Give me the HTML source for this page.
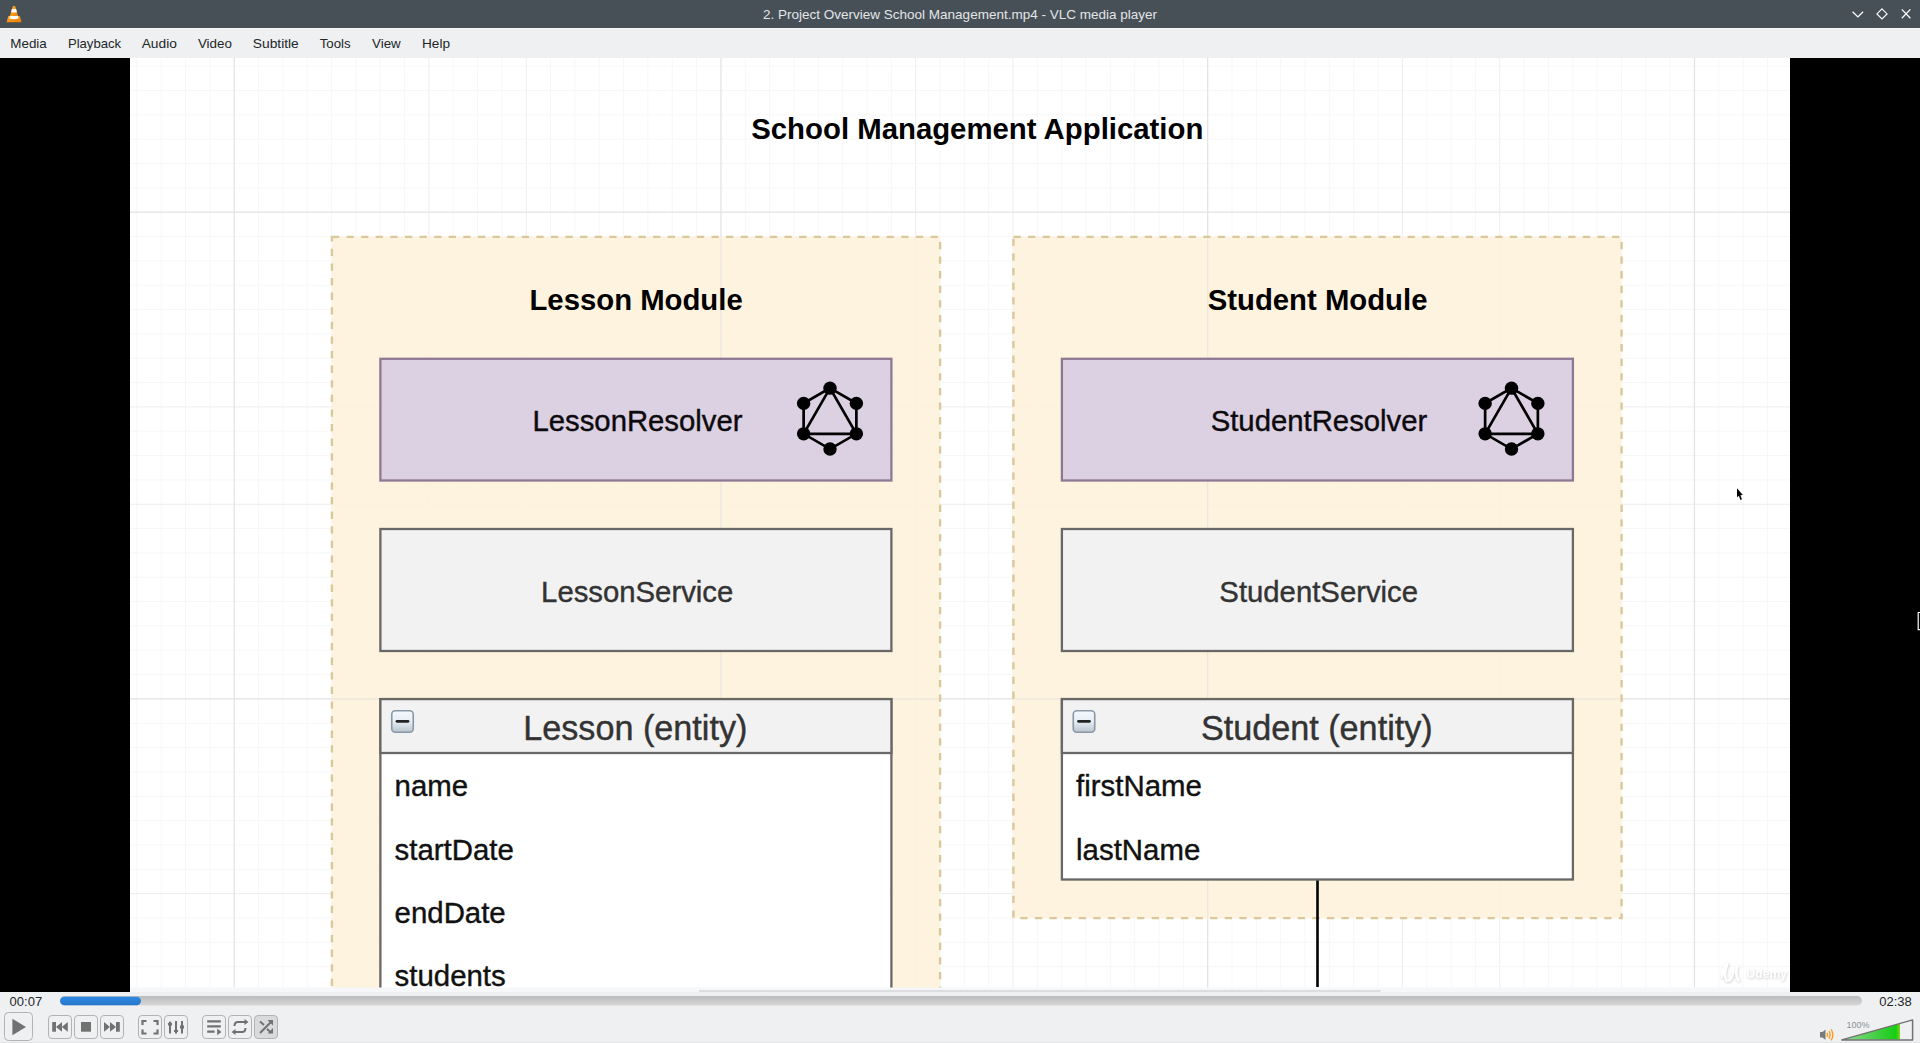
<!DOCTYPE html>
<html><head><meta charset="utf-8">
<style>
html,body{margin:0;padding:0;width:1920px;height:1043px;overflow:hidden;background:#eff0f1;}
svg{display:block;}
text{font-family:"Liberation Sans", sans-serif;}
</style></head><body>
<svg width="1920" height="1043" viewBox="0 0 1920 1043">
<defs>
<linearGradient id="colg" x1="0" y1="0" x2="0" y2="1">
<stop offset="0" stop-color="#f4f9fd"/><stop offset="0.5" stop-color="#e6eef5"/><stop offset="1" stop-color="#b9c4cd"/>
</linearGradient>
<linearGradient id="trough" x1="0" y1="0" x2="0" y2="1">
<stop offset="0" stop-color="#bcbcbc"/><stop offset="1" stop-color="#d6d6d6"/>
</linearGradient>
<linearGradient id="prog" x1="0" y1="0" x2="0" y2="1">
<stop offset="0" stop-color="#2f8ae2"/><stop offset="1" stop-color="#2576cb"/>
</linearGradient>
<linearGradient id="volg" x1="0" y1="0" x2="1" y2="0">
<stop offset="0" stop-color="#93dc93"/><stop offset="0.55" stop-color="#49cf49"/><stop offset="0.93" stop-color="#14cf14"/><stop offset="1" stop-color="#86d21a"/>
</linearGradient>
<filter id="wm" x="-20%" y="-40%" width="140%" height="180%"><feDropShadow dx="0.6" dy="1" stdDeviation="0.9" flood-color="#c8c8c8" flood-opacity="0.9"/></filter>
<filter id="cur" x="-50%" y="-50%" width="200%" height="200%"><feGaussianBlur stdDeviation="0.45"/></filter>
<filter id="vblur" x="0" y="0" width="1" height="1" filterUnits="objectBoundingBox"><feGaussianBlur stdDeviation="0.8"/></filter>
<linearGradient id="cone" x1="0" y1="0" x2="1" y2="1">
<stop offset="0" stop-color="#ffac2e"/><stop offset="1" stop-color="#ee7d00"/>
</linearGradient>
</defs>

<rect x="0" y="0" width="1920" height="28" fill="#475057"/>
<rect x="0" y="28" width="1920" height="1" fill="#f7f7f8"/>
<g>
<path d="M6.6,22.3 L8.3,15.9 L19.8,15.9 L21.6,22.3 Z" fill="url(#cone)"/>
<path d="M12.5,6.9 Q14,4.8 15.5,6.9 L18.9,19.2 Q14,20.9 9.1,19.2 Z" fill="url(#cone)"/>
<path d="M11.9,9.1 L16.1,9.1 L16.95,12.2 Q14,12.9 11.05,12.2 Z" fill="#fbfbfb"/>
<path d="M10.1,15.7 Q14,16.4 17.9,15.7 L18.7,18.6 Q14,19.7 9.3,18.6 Z" fill="#fbfbfb"/>
</g>
<text x="960" y="19.3" font-size="13.5" fill="#e3e5e7" text-anchor="middle">2. Project Overview School Management.mp4 - VLC media player</text>
<path d="M1852.6,11.8 L1857.9,16.9 L1863.1,11.8" fill="none" stroke="#fcfcfc" stroke-width="1.3"/>
<path d="M1882,8.8 L1887.1,13.9 L1882,19 L1876.9,13.9 Z" fill="none" stroke="#fcfcfc" stroke-width="1.15"/>
<path d="M1901.8,9.4 L1910.4,18.2 M1910.4,9.4 L1901.8,18.2" fill="none" stroke="#fcfcfc" stroke-width="1.3"/>
<text x="10.3" y="47.9" font-size="13.3" fill="#232629" textLength="36.5" lengthAdjust="spacingAndGlyphs">Media</text>
<text x="67.9" y="47.9" font-size="13.3" fill="#232629" textLength="53.2" lengthAdjust="spacingAndGlyphs">Playback</text>
<text x="141.7" y="47.9" font-size="13.3" fill="#232629" textLength="35.2" lengthAdjust="spacingAndGlyphs">Audio</text>
<text x="197.9" y="47.9" font-size="13.3" fill="#232629" textLength="34.0" lengthAdjust="spacingAndGlyphs">Video</text>
<text x="252.8" y="47.9" font-size="13.3" fill="#232629" textLength="46.0" lengthAdjust="spacingAndGlyphs">Subtitle</text>
<text x="319.7" y="47.9" font-size="13.3" fill="#232629" textLength="31.0" lengthAdjust="spacingAndGlyphs">Tools</text>
<text x="372.1" y="47.9" font-size="13.3" fill="#232629" textLength="28.6" lengthAdjust="spacingAndGlyphs">View</text>
<text x="422.0" y="47.9" font-size="13.3" fill="#232629" textLength="28.0" lengthAdjust="spacingAndGlyphs">Help</text>
<rect x="0" y="58" width="1920" height="934" fill="#000"/>
<rect x="130" y="58" width="1660" height="934" fill="#ffffff"/>
<svg x="130" y="58" width="1660" height="934" viewBox="130 58 1660 934" overflow="hidden">
<g class="dg">
<rect x="130" y="58" width="1660" height="934" fill="#ffffff"/>
<line x1="136.85" y1="58" x2="136.85" y2="992" stroke="#f7f7f7" stroke-width="1"/>
<line x1="161.19" y1="58" x2="161.19" y2="992" stroke="#f7f7f7" stroke-width="1"/>
<line x1="185.52" y1="58" x2="185.52" y2="992" stroke="#f7f7f7" stroke-width="1"/>
<line x1="209.86" y1="58" x2="209.86" y2="992" stroke="#f7f7f7" stroke-width="1"/>
<line x1="258.54" y1="58" x2="258.54" y2="992" stroke="#f7f7f7" stroke-width="1"/>
<line x1="282.88" y1="58" x2="282.88" y2="992" stroke="#f7f7f7" stroke-width="1"/>
<line x1="307.21" y1="58" x2="307.21" y2="992" stroke="#f7f7f7" stroke-width="1"/>
<line x1="331.55" y1="58" x2="331.55" y2="992" stroke="#f7f7f7" stroke-width="1"/>
<line x1="355.89" y1="58" x2="355.89" y2="992" stroke="#f7f7f7" stroke-width="1"/>
<line x1="380.22" y1="58" x2="380.22" y2="992" stroke="#f7f7f7" stroke-width="1"/>
<line x1="404.56" y1="58" x2="404.56" y2="992" stroke="#f7f7f7" stroke-width="1"/>
<line x1="428.90" y1="58" x2="428.90" y2="992" stroke="#ededed" stroke-width="1"/>
<line x1="453.24" y1="58" x2="453.24" y2="992" stroke="#f7f7f7" stroke-width="1"/>
<line x1="477.57" y1="58" x2="477.57" y2="992" stroke="#f7f7f7" stroke-width="1"/>
<line x1="501.91" y1="58" x2="501.91" y2="992" stroke="#f7f7f7" stroke-width="1"/>
<line x1="526.25" y1="58" x2="526.25" y2="992" stroke="#ededed" stroke-width="1"/>
<line x1="550.59" y1="58" x2="550.59" y2="992" stroke="#f7f7f7" stroke-width="1"/>
<line x1="574.92" y1="58" x2="574.92" y2="992" stroke="#f7f7f7" stroke-width="1"/>
<line x1="599.26" y1="58" x2="599.26" y2="992" stroke="#f7f7f7" stroke-width="1"/>
<line x1="623.60" y1="58" x2="623.60" y2="992" stroke="#f7f7f7" stroke-width="1"/>
<line x1="647.94" y1="58" x2="647.94" y2="992" stroke="#f7f7f7" stroke-width="1"/>
<line x1="672.27" y1="58" x2="672.27" y2="992" stroke="#f7f7f7" stroke-width="1"/>
<line x1="696.61" y1="58" x2="696.61" y2="992" stroke="#f7f7f7" stroke-width="1"/>
<line x1="745.29" y1="58" x2="745.29" y2="992" stroke="#f7f7f7" stroke-width="1"/>
<line x1="769.62" y1="58" x2="769.62" y2="992" stroke="#f7f7f7" stroke-width="1"/>
<line x1="793.96" y1="58" x2="793.96" y2="992" stroke="#f7f7f7" stroke-width="1"/>
<line x1="818.30" y1="58" x2="818.30" y2="992" stroke="#f7f7f7" stroke-width="1"/>
<line x1="842.64" y1="58" x2="842.64" y2="992" stroke="#f7f7f7" stroke-width="1"/>
<line x1="866.97" y1="58" x2="866.97" y2="992" stroke="#f7f7f7" stroke-width="1"/>
<line x1="891.31" y1="58" x2="891.31" y2="992" stroke="#f7f7f7" stroke-width="1"/>
<line x1="915.65" y1="58" x2="915.65" y2="992" stroke="#ededed" stroke-width="1"/>
<line x1="939.99" y1="58" x2="939.99" y2="992" stroke="#f7f7f7" stroke-width="1"/>
<line x1="964.33" y1="58" x2="964.33" y2="992" stroke="#f7f7f7" stroke-width="1"/>
<line x1="988.66" y1="58" x2="988.66" y2="992" stroke="#f7f7f7" stroke-width="1"/>
<line x1="1013.00" y1="58" x2="1013.00" y2="992" stroke="#ededed" stroke-width="1"/>
<line x1="1037.34" y1="58" x2="1037.34" y2="992" stroke="#f7f7f7" stroke-width="1"/>
<line x1="1061.67" y1="58" x2="1061.67" y2="992" stroke="#f7f7f7" stroke-width="1"/>
<line x1="1086.01" y1="58" x2="1086.01" y2="992" stroke="#f7f7f7" stroke-width="1"/>
<line x1="1110.35" y1="58" x2="1110.35" y2="992" stroke="#f7f7f7" stroke-width="1"/>
<line x1="1134.69" y1="58" x2="1134.69" y2="992" stroke="#f7f7f7" stroke-width="1"/>
<line x1="1159.02" y1="58" x2="1159.02" y2="992" stroke="#f7f7f7" stroke-width="1"/>
<line x1="1183.36" y1="58" x2="1183.36" y2="992" stroke="#f7f7f7" stroke-width="1"/>
<line x1="1232.04" y1="58" x2="1232.04" y2="992" stroke="#f7f7f7" stroke-width="1"/>
<line x1="1256.38" y1="58" x2="1256.38" y2="992" stroke="#f7f7f7" stroke-width="1"/>
<line x1="1280.71" y1="58" x2="1280.71" y2="992" stroke="#f7f7f7" stroke-width="1"/>
<line x1="1305.05" y1="58" x2="1305.05" y2="992" stroke="#f7f7f7" stroke-width="1"/>
<line x1="1329.39" y1="58" x2="1329.39" y2="992" stroke="#f7f7f7" stroke-width="1"/>
<line x1="1353.72" y1="58" x2="1353.72" y2="992" stroke="#f7f7f7" stroke-width="1"/>
<line x1="1378.06" y1="58" x2="1378.06" y2="992" stroke="#f7f7f7" stroke-width="1"/>
<line x1="1402.40" y1="58" x2="1402.40" y2="992" stroke="#ededed" stroke-width="1"/>
<line x1="1426.74" y1="58" x2="1426.74" y2="992" stroke="#f7f7f7" stroke-width="1"/>
<line x1="1451.08" y1="58" x2="1451.08" y2="992" stroke="#f7f7f7" stroke-width="1"/>
<line x1="1475.41" y1="58" x2="1475.41" y2="992" stroke="#f7f7f7" stroke-width="1"/>
<line x1="1499.75" y1="58" x2="1499.75" y2="992" stroke="#ededed" stroke-width="1"/>
<line x1="1524.09" y1="58" x2="1524.09" y2="992" stroke="#f7f7f7" stroke-width="1"/>
<line x1="1548.42" y1="58" x2="1548.42" y2="992" stroke="#f7f7f7" stroke-width="1"/>
<line x1="1572.76" y1="58" x2="1572.76" y2="992" stroke="#f7f7f7" stroke-width="1"/>
<line x1="1597.10" y1="58" x2="1597.10" y2="992" stroke="#f7f7f7" stroke-width="1"/>
<line x1="1621.44" y1="58" x2="1621.44" y2="992" stroke="#f7f7f7" stroke-width="1"/>
<line x1="1645.77" y1="58" x2="1645.77" y2="992" stroke="#f7f7f7" stroke-width="1"/>
<line x1="1670.11" y1="58" x2="1670.11" y2="992" stroke="#f7f7f7" stroke-width="1"/>
<line x1="1718.79" y1="58" x2="1718.79" y2="992" stroke="#f7f7f7" stroke-width="1"/>
<line x1="1743.12" y1="58" x2="1743.12" y2="992" stroke="#f7f7f7" stroke-width="1"/>
<line x1="1767.46" y1="58" x2="1767.46" y2="992" stroke="#f7f7f7" stroke-width="1"/>
<line x1="130" y1="66.18" x2="1790" y2="66.18" stroke="#f7f7f7" stroke-width="1"/>
<line x1="130" y1="90.51" x2="1790" y2="90.51" stroke="#f7f7f7" stroke-width="1"/>
<line x1="130" y1="114.85" x2="1790" y2="114.85" stroke="#f7f7f7" stroke-width="1"/>
<line x1="130" y1="139.19" x2="1790" y2="139.19" stroke="#f7f7f7" stroke-width="1"/>
<line x1="130" y1="163.52" x2="1790" y2="163.52" stroke="#f7f7f7" stroke-width="1"/>
<line x1="130" y1="187.86" x2="1790" y2="187.86" stroke="#f7f7f7" stroke-width="1"/>
<line x1="130" y1="236.54" x2="1790" y2="236.54" stroke="#f7f7f7" stroke-width="1"/>
<line x1="130" y1="260.88" x2="1790" y2="260.88" stroke="#f7f7f7" stroke-width="1"/>
<line x1="130" y1="285.21" x2="1790" y2="285.21" stroke="#f7f7f7" stroke-width="1"/>
<line x1="130" y1="309.55" x2="1790" y2="309.55" stroke="#f7f7f7" stroke-width="1"/>
<line x1="130" y1="333.89" x2="1790" y2="333.89" stroke="#f7f7f7" stroke-width="1"/>
<line x1="130" y1="358.22" x2="1790" y2="358.22" stroke="#f7f7f7" stroke-width="1"/>
<line x1="130" y1="382.56" x2="1790" y2="382.56" stroke="#f7f7f7" stroke-width="1"/>
<line x1="130" y1="406.90" x2="1790" y2="406.90" stroke="#ededed" stroke-width="1"/>
<line x1="130" y1="431.24" x2="1790" y2="431.24" stroke="#f7f7f7" stroke-width="1"/>
<line x1="130" y1="455.57" x2="1790" y2="455.57" stroke="#f7f7f7" stroke-width="1"/>
<line x1="130" y1="479.91" x2="1790" y2="479.91" stroke="#f7f7f7" stroke-width="1"/>
<line x1="130" y1="504.25" x2="1790" y2="504.25" stroke="#ededed" stroke-width="1"/>
<line x1="130" y1="528.59" x2="1790" y2="528.59" stroke="#f7f7f7" stroke-width="1"/>
<line x1="130" y1="552.92" x2="1790" y2="552.92" stroke="#f7f7f7" stroke-width="1"/>
<line x1="130" y1="577.26" x2="1790" y2="577.26" stroke="#f7f7f7" stroke-width="1"/>
<line x1="130" y1="601.60" x2="1790" y2="601.60" stroke="#f7f7f7" stroke-width="1"/>
<line x1="130" y1="625.94" x2="1790" y2="625.94" stroke="#f7f7f7" stroke-width="1"/>
<line x1="130" y1="650.27" x2="1790" y2="650.27" stroke="#f7f7f7" stroke-width="1"/>
<line x1="130" y1="674.61" x2="1790" y2="674.61" stroke="#f7f7f7" stroke-width="1"/>
<line x1="130" y1="723.29" x2="1790" y2="723.29" stroke="#f7f7f7" stroke-width="1"/>
<line x1="130" y1="747.62" x2="1790" y2="747.62" stroke="#f7f7f7" stroke-width="1"/>
<line x1="130" y1="771.96" x2="1790" y2="771.96" stroke="#f7f7f7" stroke-width="1"/>
<line x1="130" y1="796.30" x2="1790" y2="796.30" stroke="#f7f7f7" stroke-width="1"/>
<line x1="130" y1="820.64" x2="1790" y2="820.64" stroke="#f7f7f7" stroke-width="1"/>
<line x1="130" y1="844.97" x2="1790" y2="844.97" stroke="#f7f7f7" stroke-width="1"/>
<line x1="130" y1="869.31" x2="1790" y2="869.31" stroke="#f7f7f7" stroke-width="1"/>
<line x1="130" y1="893.65" x2="1790" y2="893.65" stroke="#ededed" stroke-width="1"/>
<line x1="130" y1="917.99" x2="1790" y2="917.99" stroke="#f7f7f7" stroke-width="1"/>
<line x1="130" y1="942.33" x2="1790" y2="942.33" stroke="#f7f7f7" stroke-width="1"/>
<line x1="130" y1="966.66" x2="1790" y2="966.66" stroke="#f7f7f7" stroke-width="1"/>
<line x1="130" y1="991.00" x2="1790" y2="991.00" stroke="#ededed" stroke-width="1"/>
<line x1="234.20" y1="58" x2="234.20" y2="992" stroke="#e2e2e2" stroke-width="1.2"/>
<line x1="130" y1="212.20" x2="1790" y2="212.20" stroke="#e2e2e2" stroke-width="1.2"/>
<line x1="720.95" y1="58" x2="720.95" y2="992" stroke="#e2e2e2" stroke-width="1.2"/>
<line x1="130" y1="698.95" x2="1790" y2="698.95" stroke="#e2e2e2" stroke-width="1.2"/>
<line x1="1207.70" y1="58" x2="1207.70" y2="992" stroke="#e2e2e2" stroke-width="1.2"/>
<line x1="1694.45" y1="58" x2="1694.45" y2="992" stroke="#e2e2e2" stroke-width="1.2"/>
<text x="977.3" y="139" font-size="29.35" font-weight="700" fill="#000" text-anchor="middle">School Management Application</text>
<rect x="331.9" y="236.9" width="608.2" height="766.5" fill="#fef1d8" fill-opacity="0.86" stroke="#dac89a" stroke-width="2.4" stroke-dasharray="7.3 7.3"/>
<g clip-path="url(#cc0)" opacity="0.6"><line x1="234.20" y1="58" x2="234.20" y2="992" stroke="#e2e2e2" stroke-width="1.2"/><line x1="130" y1="212.20" x2="1790" y2="212.20" stroke="#e2e2e2" stroke-width="1.2"/><line x1="720.95" y1="58" x2="720.95" y2="992" stroke="#e2e2e2" stroke-width="1.2"/><line x1="130" y1="698.95" x2="1790" y2="698.95" stroke="#e2e2e2" stroke-width="1.2"/><line x1="1207.70" y1="58" x2="1207.70" y2="992" stroke="#e2e2e2" stroke-width="1.2"/><line x1="1694.45" y1="58" x2="1694.45" y2="992" stroke="#e2e2e2" stroke-width="1.2"/></g>
<clipPath id="cc0"><rect x="333.09999999999997" y="238.1" width="605.8" height="764.1"/></clipPath>
<text x="636.1" y="309.75" font-size="29.3" font-weight="700" fill="#000" text-anchor="middle">Lesson Module</text>
<rect x="380.4" y="358.8" width="511" height="121.7" fill="#dcd1e2" stroke="#8e7893" stroke-width="2.3"/>
<text x="637.5" y="431.3" font-size="29.3" fill="#0d0a0d" stroke="#0d0a0d" stroke-width="0.4" text-anchor="middle">LessonResolver</text>
<path d="M830.00,388.15 L856.37,403.38 L856.37,433.83 L830.00,449.05 L803.63,433.83 L803.63,403.38 Z" fill="none" stroke="#000" stroke-width="2.7"/>
<path d="M830.00,388.15 L856.37,433.83 L803.63,433.83 Z" fill="none" stroke="#000" stroke-width="2.7"/>
<circle cx="830.00" cy="388.15" r="6.7" fill="#000"/>
<circle cx="856.37" cy="403.38" r="6.7" fill="#000"/>
<circle cx="856.37" cy="433.83" r="6.7" fill="#000"/>
<circle cx="830.00" cy="449.05" r="6.7" fill="#000"/>
<circle cx="803.63" cy="433.83" r="6.7" fill="#000"/>
<circle cx="803.63" cy="403.38" r="6.7" fill="#000"/>
<rect x="380.4" y="529" width="511" height="122" fill="#f2f2f2" stroke="#686866" stroke-width="2.3"/>
<text x="637.2" y="601.6" font-size="29.3" fill="#333" stroke="#333" stroke-width="0.4" text-anchor="middle">LessonService</text>
<rect x="380.4" y="699.1" width="511" height="400.9" fill="#ffffff" stroke="#686866" stroke-width="2.3"/>
<rect x="380.4" y="699.1" width="511" height="53.9" fill="#f2f2f2" stroke="#686866" stroke-width="2.3"/>
<text x="635.3" y="740.3" font-size="34.2" fill="#333" stroke="#333" stroke-width="0.4" text-anchor="middle">Lesson (entity)</text>
<g>
<rect x="391.75" y="710.75" width="21.5" height="21.5" rx="3.5" fill="url(#colg)" stroke="#8a98a6" stroke-width="1.6"/>
<line x1="397" y1="721.3" x2="408" y2="721.3" stroke="#222" stroke-width="2.8" stroke-linecap="round"/>
</g>
<text x="394.6" y="796.4" font-size="29.4" fill="#111" stroke="#111" stroke-width="0.4">name</text>
<text x="394.6" y="859.6" font-size="29.4" fill="#111" stroke="#111" stroke-width="0.4">startDate</text>
<text x="394.6" y="922.8" font-size="29.4" fill="#111" stroke="#111" stroke-width="0.4">endDate</text>
<text x="394.6" y="986.0" font-size="29.4" fill="#111" stroke="#111" stroke-width="0.4">students</text>
<rect x="1013.4" y="236.9" width="608.2" height="681.2" fill="#fef1d8" fill-opacity="0.86" stroke="#dac89a" stroke-width="2.4" stroke-dasharray="7.3 7.3"/>
<g clip-path="url(#cc681)" opacity="0.6"><line x1="234.20" y1="58" x2="234.20" y2="992" stroke="#e2e2e2" stroke-width="1.2"/><line x1="130" y1="212.20" x2="1790" y2="212.20" stroke="#e2e2e2" stroke-width="1.2"/><line x1="720.95" y1="58" x2="720.95" y2="992" stroke="#e2e2e2" stroke-width="1.2"/><line x1="130" y1="698.95" x2="1790" y2="698.95" stroke="#e2e2e2" stroke-width="1.2"/><line x1="1207.70" y1="58" x2="1207.70" y2="992" stroke="#e2e2e2" stroke-width="1.2"/><line x1="1694.45" y1="58" x2="1694.45" y2="992" stroke="#e2e2e2" stroke-width="1.2"/></g>
<clipPath id="cc681"><rect x="1014.6" y="238.1" width="605.8" height="678.8000000000001"/></clipPath>
<text x="1317.6" y="309.75" font-size="29.3" font-weight="700" fill="#000" text-anchor="middle">Student Module</text>
<rect x="1061.9" y="358.8" width="511" height="121.7" fill="#dcd1e2" stroke="#8e7893" stroke-width="2.3"/>
<text x="1319.0" y="431.3" font-size="29.3" fill="#0d0a0d" stroke="#0d0a0d" stroke-width="0.4" text-anchor="middle">StudentResolver</text>
<path d="M1511.50,388.15 L1537.87,403.38 L1537.87,433.83 L1511.50,449.05 L1485.13,433.83 L1485.13,403.38 Z" fill="none" stroke="#000" stroke-width="2.7"/>
<path d="M1511.50,388.15 L1537.87,433.83 L1485.13,433.83 Z" fill="none" stroke="#000" stroke-width="2.7"/>
<circle cx="1511.50" cy="388.15" r="6.7" fill="#000"/>
<circle cx="1537.87" cy="403.38" r="6.7" fill="#000"/>
<circle cx="1537.87" cy="433.83" r="6.7" fill="#000"/>
<circle cx="1511.50" cy="449.05" r="6.7" fill="#000"/>
<circle cx="1485.13" cy="433.83" r="6.7" fill="#000"/>
<circle cx="1485.13" cy="403.38" r="6.7" fill="#000"/>
<rect x="1061.9" y="529" width="511" height="122" fill="#f2f2f2" stroke="#686866" stroke-width="2.3"/>
<text x="1318.7" y="601.6" font-size="29.3" fill="#333" stroke="#333" stroke-width="0.4" text-anchor="middle">StudentService</text>
<rect x="1061.9" y="699.1" width="511" height="180.39999999999998" fill="#ffffff" stroke="#686866" stroke-width="2.3"/>
<rect x="1061.9" y="699.1" width="511" height="53.9" fill="#f2f2f2" stroke="#686866" stroke-width="2.3"/>
<text x="1316.8" y="740.3" font-size="34.2" fill="#333" stroke="#333" stroke-width="0.4" text-anchor="middle">Student (entity)</text>
<g>
<rect x="1073.25" y="710.75" width="21.5" height="21.5" rx="3.5" fill="url(#colg)" stroke="#8a98a6" stroke-width="1.6"/>
<line x1="1078.5" y1="721.3" x2="1089.5" y2="721.3" stroke="#222" stroke-width="2.8" stroke-linecap="round"/>
</g>
<text x="1076.1" y="796.4" font-size="29.4" fill="#111" stroke="#111" stroke-width="0.4">firstName</text>
<text x="1076.1" y="859.6" font-size="29.4" fill="#111" stroke="#111" stroke-width="0.4">lastName</text>
<line x1="1317.5" y1="880.5" x2="1317.5" y2="987" stroke="#000" stroke-width="2.6"/>
</g>
<rect x="130" y="987.5" width="1660" height="4.5" fill="#f6f7f8"/>
<rect x="699" y="990" width="681.5" height="2" fill="#dcdddf"/>
<g filter="url(#wm)"><text x="1746.5" y="978.3" font-size="12.2" font-weight="700" fill="#ffffff">Udemy</text><path d="M1722,977 Q1722.5,968 1727.5,963.5 M1727,965 Q1723,975 1726.5,980.5 Q1731,982 1733.5,972 M1737,967 Q1735,975 1738.5,980.5" fill="none" stroke="#fff" stroke-width="2.6" stroke-linecap="round"/></g>
<path d="M1737,488.3 L1737,497.2 L1738.9,495.7 L1740.4,499.9 L1742,499.2 L1740.4,495.3 L1742.8,495.1 Z" fill="#000" filter="url(#cur)"/>
</svg>
<path d="M1920,612.5 L1918.2,612.5 L1918.2,629.6 L1920,629.6" fill="none" stroke="#fff" stroke-width="1.2"/>
<text x="9.6" y="1006.2" font-size="13" fill="#232629">00:07</text>
<rect x="60" y="996" width="1802" height="9.5" rx="4.75" fill="url(#trough)"/>
<rect x="60" y="996.8" width="81" height="8.4" rx="4.2" fill="url(#prog)"/>
<text x="1879.3" y="1006.2" font-size="13" fill="#232629">02:38</text>
<rect x="4.5" y="1012.5" width="28" height="28" rx="4" fill="#eff0f1" stroke="#b2b3b4" stroke-width="1"/>
<path d="M12.4,1018.7 L26,1027 L12.4,1035.3 Z" fill="#717171"/>
<rect x="48.5" y="1015.5" width="23" height="23" rx="3.5" fill="#eff0f1" stroke="#b2b3b4" stroke-width="1"/>
<rect x="74.5" y="1015.5" width="23" height="23" rx="3.5" fill="#eff0f1" stroke="#b2b3b4" stroke-width="1"/>
<rect x="100.5" y="1015.5" width="23" height="23" rx="3.5" fill="#eff0f1" stroke="#b2b3b4" stroke-width="1"/>
<rect x="138.5" y="1015.5" width="23" height="23" rx="3.5" fill="#eff0f1" stroke="#b2b3b4" stroke-width="1"/>
<rect x="164.5" y="1015.5" width="23" height="23" rx="3.5" fill="#eff0f1" stroke="#b2b3b4" stroke-width="1"/>
<rect x="202.5" y="1015.5" width="23" height="23" rx="3.5" fill="#eff0f1" stroke="#b2b3b4" stroke-width="1"/>
<rect x="228.5" y="1015.5" width="23" height="23" rx="3.5" fill="#eff0f1" stroke="#b2b3b4" stroke-width="1"/>
<rect x="254.5" y="1015.5" width="23" height="23" rx="3.5" fill="#d9dadc" stroke="#b2b3b4" stroke-width="1"/>
<rect x="52.2" y="1022" width="3.8" height="9.7" fill="#717171"/>
<path d="M56,1026.9 L62,1022 L62,1031.7 Z M61.8,1026.9 L67.8,1022 L67.8,1031.7 Z" fill="#717171"/>
<rect x="81" y="1022" width="10" height="9.7" fill="#717171"/>
<path d="M104,1022 L110,1026.9 L104,1031.7 Z M110,1022 L116,1026.9 L110,1031.7 Z" fill="#717171"/>
<rect x="116" y="1022" width="3.8" height="9.7" fill="#717171"/>
<path d="M142.5,1025 L142.5,1021 L146.5,1021 M153.5,1021 L157.5,1021 L157.5,1025 M142.5,1029.5 L142.5,1033.5 L146.5,1033.5 M157.5,1029.5 L157.5,1033.5 L153.5,1033.5" fill="none" stroke="#717171" stroke-width="2.2"/>
<path d="M170,1022 L170,1033.5 M176,1021 L176,1033.5 M182,1021 L182,1033.5" stroke="#717171" stroke-width="2" fill="none"/>
<path d="M167.7,1024 L170,1021 L172.3,1024 Z M173.7,1030.5 L176,1033.5 L178.3,1030.5 Z" fill="#717171"/>
<rect x="174" y="1030" width="4" height="2" fill="#717171"/><rect x="180" y="1025.5" width="4" height="3" fill="#717171"/><rect x="168" y="1023.5" width="4" height="2" fill="#717171"/>
<path d="M207.2,1021.3 L220.8,1021.3 M207.2,1026.4 L220.8,1026.4 M207.2,1031.6 L214.6,1031.6" stroke="#717171" stroke-width="2.2" fill="none"/>
<path d="M217.2,1028.4 L221.4,1032 L217.2,1035.3 Z" fill="#717171"/>
<path d="M234.5,1026 Q234.5,1022 238,1022 L245.5,1022 M245.5,1028 Q245.5,1032 242,1032 L234.5,1032" stroke="#717171" stroke-width="2" fill="none"/>
<path d="M244.5,1019 L248.5,1022 L244.5,1025 Z M235.5,1029 L231.5,1032 L235.5,1035 Z" fill="#717171"/>
<path d="M260,1021.5 L264,1025 M260,1033 L271.5,1021.5 M267,1029 L271,1032.5" stroke="#717171" stroke-width="2" fill="none"/>
<path d="M267.5,1020 L273,1020 L273,1025.5 Z M273,1033.5 L267.5,1033.5 L273,1028 Z" fill="#717171"/>
<path d="M1820,1032 L1822.5,1032 L1825.5,1029.5 L1825.5,1040 L1822.5,1037.5 L1820,1037.5 Z" fill="#7a7a7a"/>
<path d="M1827,1032.8 Q1828.2,1034.8 1827,1036.8 M1829,1031 Q1831.2,1034.8 1829,1038.6 M1831.2,1029.3 Q1834.5,1034.8 1831.2,1040.3" stroke="#ff9a1a" stroke-width="1.35" fill="none"/>
<path d="M1842.5,1039.8 L1900,1023.5 L1900,1039.8 Z" fill="url(#volg)"/>
<path d="M1841.8,1039.9 L1912.6,1019.9 L1912.6,1039.9 Z" fill="none" stroke="#727272" stroke-width="1.5" stroke-linejoin="round"/>
<text x="1846.6" y="1027.6" font-size="9" fill="#8a9097">100%</text>
<rect x="0" y="1042" width="1920" height="1" fill="#e3e5e7"/>
</svg></body></html>
